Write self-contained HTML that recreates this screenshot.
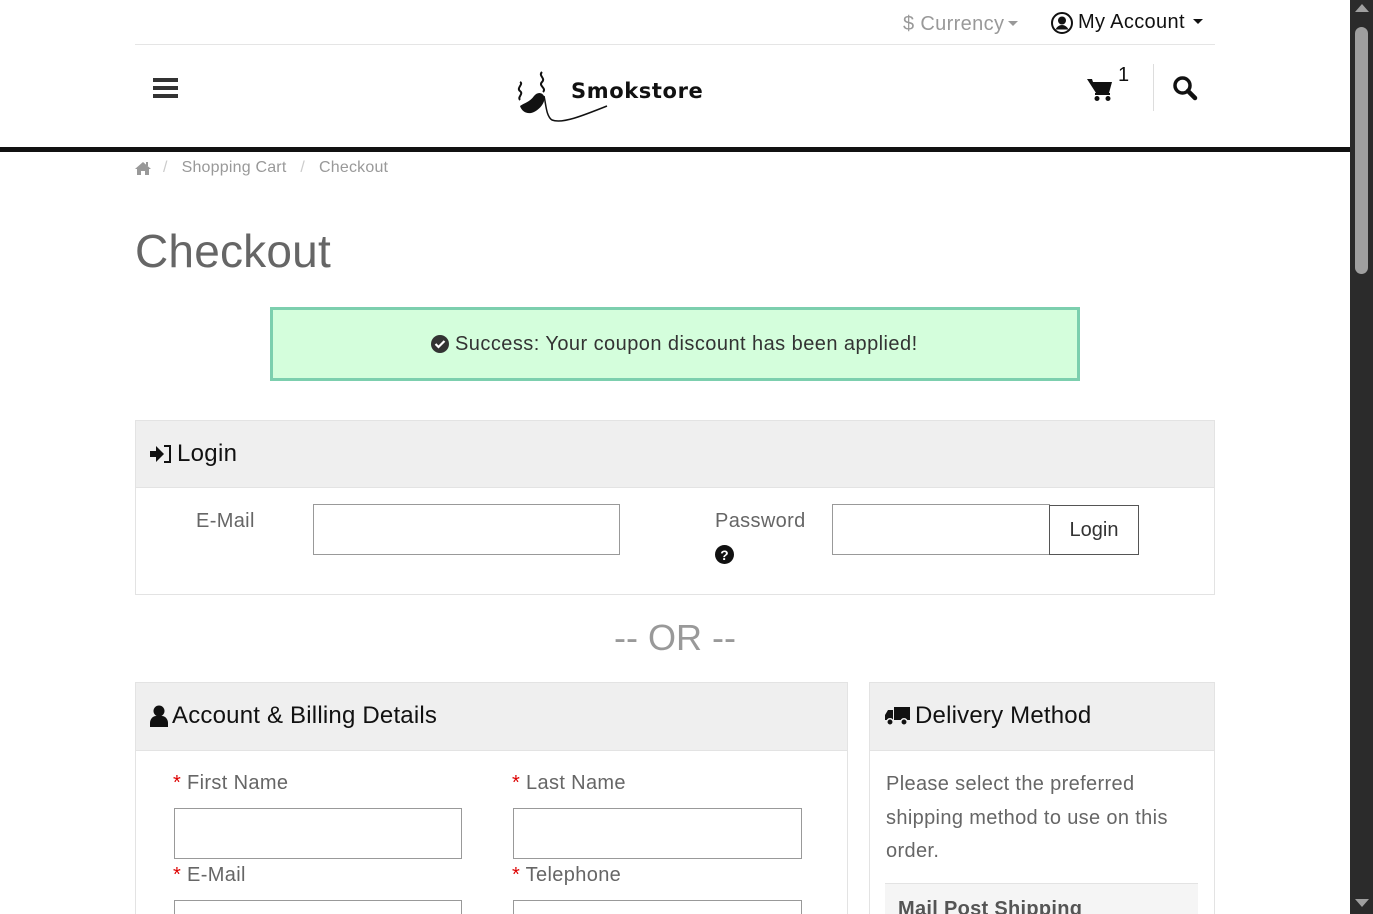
<!DOCTYPE html>
<html style="overflow:hidden;width:1373px;height:914px"><head><meta charset="utf-8"><style>
*{box-sizing:border-box;margin:0;padding:0}
body{width:1373px;height:914px;overflow:hidden;background:#fff;font-family:"Liberation Sans",Arial,sans-serif;position:relative;color:#333}
.a{position:absolute}
.inp{position:absolute;border:1px solid #999;background:#fff}
.lbl{position:absolute;font-size:20px;color:#666;letter-spacing:0.35px}
.req{color:#d00}
.car{display:inline-block;width:0;height:0;border-left:5px solid transparent;border-right:5px solid transparent;border-top:5px solid currentColor;vertical-align:4px;margin-left:4px}
</style></head><body>
<div class="a" style="left:903px;top:13px;font-size:20px;color:#999;letter-spacing:0.35px">$ Currency<span class="car"></span></div>
<svg class="a" style="left:1051px;top:12px" width="22" height="22" viewBox="0 0 22 22"><circle cx="11" cy="11" r="10" fill="none" stroke="#111" stroke-width="2"/><circle cx="11" cy="8.5" r="4" fill="#111"/><path d="M4.5 17.5c1.5-3 4-4.5 6.5-4.5s5 1.5 6.5 4.5" fill="#111"/></svg>
<div class="a" style="left:1078px;top:11px;font-size:20px;color:#111;letter-spacing:0.35px">My Account <span class="car" style="margin-left:2px"></span></div>
<div class="a" style="left:135px;top:44px;width:1080px;height:1px;background:#e5e5e5"></div>
<svg class="a" style="left:153px;top:78px" width="25" height="21"><rect y="0" width="25" height="4" fill="#333"/><rect y="8" width="25" height="4" fill="#333"/><rect y="16" width="25" height="4" fill="#333"/></svg>
<svg class="a" style="left:512px;top:68px" width="100" height="56" viewBox="0 0 100 56">
<path d="M8 14c4 2-4 6 0 9s-3 6 0 9" stroke="#111" fill="none" stroke-width="2"/>
<path d="M30 4c-4 4 4 6 0 10s5 6 1 10" stroke="#111" fill="none" stroke-width="2"/>
<path d="M8 38c4-3 10-4 14-10c3-4 8-4 10 0c2 4-2 12-10 16c-6 3-12 0-14-6z" fill="#111"/>
<path d="M32 28c2 8 2 20 8 24c10 4 30-4 55-14" stroke="#111" fill="none" stroke-width="1.5"/></svg>
<div class="a" style="left:571px;top:79px;font-size:21px;font-weight:bold;letter-spacing:0.6px;color:#111;font-family:'DejaVu Sans',sans-serif">Smokstore</div>
<svg class="a" style="left:1087px;top:78px" width="26" height="24" viewBox="0 0 26 24"><path d="M0 1h5l1 3h19l-3 11H9z" fill="#111"/><rect x="8" y="15" width="15" height="2" fill="#111"/><circle cx="10" cy="20.5" r="2.5" fill="#111"/><circle cx="21" cy="20.5" r="2.5" fill="#111"/></svg>
<div class="a" style="left:1118px;top:64px;font-size:20px;color:#111">1</div>
<div class="a" style="left:1153px;top:64px;width:1px;height:47px;background:#ddd"></div>
<svg class="a" style="left:1172px;top:75px" width="26" height="26" viewBox="0 0 26 26"><circle cx="10.5" cy="10.5" r="7.5" fill="none" stroke="#111" stroke-width="3.5"/><path d="M16 16l7 7" stroke="#111" stroke-width="4.5" stroke-linecap="round"/></svg>
<div class="a" style="left:0;top:147px;width:1350px;height:5px;background:#111"></div>
<svg class="a" style="left:135px;top:161px" width="16" height="14" viewBox="0 0 16 14"><path d="M8 1L0 8h2v6h4v-4h4v4h4V8h2z" fill="#999"/><rect x="11" y="1" width="2" height="4" fill="#999"/></svg>
<div class="a" style="left:163px;top:159px;font-size:16px;color:#999;letter-spacing:0.2px"><span style="color:#ccc">/</span>&nbsp;&nbsp;&nbsp;Shopping Cart&nbsp;&nbsp;&nbsp;<span style="color:#ccc">/</span>&nbsp;&nbsp;&nbsp;Checkout</div>
<div class="a" style="left:135px;top:224px;font-size:46px;color:#666;letter-spacing:0.2px">Checkout</div>
<div class="a" style="left:270px;top:307px;width:810px;height:74px;background:#d4fedc;border:3px solid #7ccfae"></div>
<svg class="a" style="left:431px;top:335px" width="18" height="18" viewBox="0 0 18 18"><circle cx="9" cy="9" r="9" fill="#333"/><path d="M4.5 9l3 3 6-6" stroke="#fff" stroke-width="2.2" fill="none"/></svg>
<div class="a" style="left:455px;top:333px;font-size:20px;color:#333;letter-spacing:0.45px">Success: Your coupon discount has been applied!</div>
<div class="a" style="left:135px;top:420px;width:1080px;height:175px;border:1px solid #e3e3e3"></div>
<div class="a" style="left:136px;top:421px;width:1078px;height:67px;background:#efefef;border-bottom:1px solid #e3e3e3"></div>
<svg class="a" style="left:150px;top:445px" width="22" height="18" viewBox="0 0 22 18"><path d="M0 6h6V1l8 8-8 8v-5H0z" fill="#111"/><path d="M14 1h6v16h-6" stroke="#111" stroke-width="2" fill="none"/></svg>
<div class="a" style="left:177px;top:440px;font-size:24px;color:#111;letter-spacing:0.3px">Login</div>
<div class="lbl" style="left:196px;top:510px">E-Mail</div>
<div class="inp" style="left:313px;top:504px;width:307px;height:51px"></div>
<div class="lbl" style="left:715px;top:510px">Password</div>
<svg class="a" style="left:715px;top:545px" width="19" height="19" viewBox="0 0 18 18"><circle cx="9" cy="9" r="9" fill="#111"/><text x="9" y="14" font-size="13" font-weight="bold" fill="#fff" text-anchor="middle" font-family="Liberation Sans">?</text></svg>
<div class="inp" style="left:832px;top:504px;width:218px;height:51px"></div>
<div class="a" style="left:1049px;top:505px;width:90px;height:50px;border:1px solid #555;font-size:20px;color:#333;text-align:center;line-height:48px">Login</div>
<div class="a" style="left:0;width:1350px;top:617px;text-align:center;font-size:36px;color:#999">-- OR --</div>
<div class="a" style="left:135px;top:682px;width:713px;height:240px;border:1px solid #e3e3e3"></div>
<div class="a" style="left:136px;top:683px;width:711px;height:68px;background:#efefef;border-bottom:1px solid #e3e3e3"></div>
<svg class="a" style="left:150px;top:705px" width="18" height="22" viewBox="0 0 18 22"><circle cx="9" cy="6" r="5.5" fill="#111"/><path d="M0 22v-4c0-4 3-7 6-7h6c3 0 6 3 6 7v4z" fill="#111"/></svg>
<div class="a" style="left:172px;top:702px;font-size:24px;color:#111;letter-spacing:0.2px">Account &amp; Billing Details</div>
<div class="lbl" style="left:173px;top:772px"><span class="req">*</span> First Name</div>
<div class="inp" style="left:174px;top:808px;width:288px;height:51px"></div>
<div class="lbl" style="left:512px;top:772px"><span class="req">*</span> Last Name</div>
<div class="inp" style="left:513px;top:808px;width:289px;height:51px"></div>
<div class="lbl" style="left:173px;top:864px"><span class="req">*</span> E-Mail</div>
<div class="inp" style="left:174px;top:900px;width:288px;height:14px;border-bottom:none"></div>
<div class="lbl" style="left:512px;top:864px"><span class="req">*</span> Telephone</div>
<div class="inp" style="left:513px;top:900px;width:289px;height:14px;border-bottom:none"></div>
<div class="a" style="left:869px;top:682px;width:346px;height:240px;border:1px solid #e3e3e3"></div>
<div class="a" style="left:870px;top:683px;width:344px;height:68px;background:#efefef;border-bottom:1px solid #e3e3e3"></div>
<svg class="a" style="left:885px;top:706px" width="25" height="20" viewBox="0 0 25 20"><rect x="9" y="1" width="16" height="13" fill="#111"/><path d="M0 14V9l3-5h5v10z" fill="#111"/><circle cx="5" cy="16" r="3.2" fill="#111" stroke="#efefef" stroke-width="1.5"/><circle cx="19" cy="16" r="3.2" fill="#111" stroke="#efefef" stroke-width="1.5"/></svg>
<div class="a" style="left:915px;top:702px;font-size:24px;color:#111;letter-spacing:0.2px">Delivery Method</div>
<div class="a" style="left:886px;top:768px;width:320px;font-size:20px;line-height:33.5px;color:#666;letter-spacing:0.35px">Please select the preferred shipping method to use on this order.</div>
<div class="a" style="left:885px;top:883px;width:313px;height:31px;background:#f5f5f5;border-top:1px solid #e3e3e3"></div>
<div class="a" style="left:898px;top:898px;font-size:20px;font-weight:bold;color:#555;letter-spacing:0.3px">Mail Post Shipping</div>
<div class="a" style="left:1350px;top:0;width:23px;height:914px;background:#2b2b2b"></div>
<div class="a" style="left:1355px;top:27px;width:13px;height:247px;background:#9f9f9f;border-radius:7px"></div>
<div class="a" style="left:1355px;top:4px;width:0;height:0;border-left:7px solid transparent;border-right:7px solid transparent;border-bottom:8px solid #9f9f9f"></div>
<div class="a" style="left:1355px;top:899px;width:0;height:0;border-left:7px solid transparent;border-right:7px solid transparent;border-top:8px solid #9f9f9f"></div>
</body></html>
